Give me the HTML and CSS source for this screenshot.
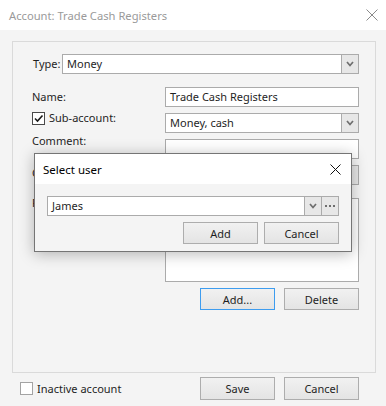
FILE: index.html
```html
<!DOCTYPE html>
<html lang="en">
<head>
  <meta charset="UTF-8">
  <title>Account: Trade Cash Registers</title>
  <link rel="stylesheet" href="styles.css">
</head>
<body>
  <div class="window">
    <div class="titlebar">
      <span class="title">Account: Trade Cash Registers</span>
      <svg class="close" width="12" height="12" viewBox="0 0 12 12">
        <path d="M0.5 0.5 L11.5 11.5 M11.5 0.5 L0.5 11.5" stroke="#8a8a8a" stroke-width="1" fill="none"/>
      </svg>
    </div>

    <div class="group">
      <div class="type-row">
        <span class="type-label">Type:</span>
        <div class="select type-select">
          <span class="value">Money</span>
          <span class="drop">
            <svg width="8" height="6" viewBox="0 0 8 6"><path d="M1 1 L4 4.5 L7 1" fill="none" stroke="#6e6e6e" stroke-width="1.7"/></svg>
          </span>
        </div>
      </div>

      <div class="cols">
        <div class="labels">
          <div class="lbl lbl-name">Name:</div>
          <div class="lbl lbl-sub">
            <span class="checkbox dark">
              <svg width="11" height="11" viewBox="0 0 11 11"><path d="M2 5.5 L4.5 8 L9.5 2.5" fill="none" stroke="#1a1a1a" stroke-width="1.6"/></svg>
            </span>
            Sub-account:
          </div>
          <div class="lbl lbl-comment">Comment:</div>
          <div class="lbl lbl-currency">Currency:</div>
          <div class="lbl lbl-resp">Responsible:</div>
        </div>

        <div class="fields">
          <div class="input">Trade Cash Registers</div>
          <div class="select">
            <span class="value">Money, cash</span>
            <span class="drop">
              <svg width="8" height="6" viewBox="0 0 8 6"><path d="M1 1 L4 4.5 L7 1" fill="none" stroke="#6e6e6e" stroke-width="1.7"/></svg>
            </span>
          </div>
          <div class="input"></div>
          <div class="select">
            <span class="value"></span>
            <span class="drop"></span>
          </div>
          <div class="list"></div>
          <div class="btn-row">
            <button class="btn focused">Add...</button>
            <button class="btn">Delete</button>
          </div>
        </div>
      </div>
    </div>

    <div class="footer">
      <div class="inactive">
        <span class="checkbox"></span>
        Inactive account
      </div>
      <div class="footer-btns">
        <button class="btn save">Save</button>
        <button class="btn cancel">Cancel</button>
      </div>
    </div>

    <div class="dialog">
      <div class="dialog-title">
        <span>Select user</span>
        <svg width="11" height="11" viewBox="0 0 11 11">
          <path d="M0.5 0.5 L10.5 10.5 M10.5 0.5 L0.5 10.5" stroke="#111" stroke-width="1" fill="none"/>
        </svg>
      </div>
      <div class="dialog-body">
        <div class="select combo">
          <span class="value">James</span>
          <span class="drop">
            <svg width="8" height="6" viewBox="0 0 8 6"><path d="M1 1 L4 4.5 L7 1" fill="none" stroke="#6e6e6e" stroke-width="1.7"/></svg>
          </span>
          <span class="drop dots">
            <svg width="10" height="2" viewBox="0 0 10 2"><rect x="0" y="0" width="2" height="2" fill="#6e6e6e"/><rect x="4" y="0" width="2" height="2" fill="#6e6e6e"/><rect x="8" y="0" width="2" height="2" fill="#6e6e6e"/></svg>
          </span>
        </div>
        <div class="dialog-btns">
          <button class="btn">Add</button>
          <button class="btn">Cancel</button>
        </div>
      </div>
    </div>
  </div>
</body>
</html>
```

FILE: styles.css
```css
body {
  margin: 0;
  font-family: "Noto Sans", "DejaVu Sans", sans-serif;
  font-size: 11px;
  color: #1f1f1f;
}

.window {
  position: relative;
  width: 386px;
  height: 406px;
  background-color: #f4f4f4;
  overflow: hidden;
}

.titlebar {
  height: 30px;
  background-color: #fff;
  display: flex;
  align-items: center;
  justify-content: space-between;
  padding: 0 8px 0 9px;
  box-sizing: border-box;
}

.title {
  color: #9a9a9a;
  font-size: 11.2px;
}

.group {
  margin: 11px 10px 0 12px;
  height: 332px;
  border: 1px solid #dadada;
  box-sizing: border-box;
}

.type-row {
  display: flex;
  margin-top: 12px;
  padding-left: 20px;
}

.type-label {
  width: 29px;
  line-height: 20px;
}

.select,
.input {
  height: 20px;
  border: 1px solid #ababab;
  background-color: #fff;
  box-sizing: border-box;
  display: flex;
  line-height: 18px;
}

.input {
  padding-left: 4px;
}

.select .value {
  flex: 1;
  padding-left: 4px;
}

.select .drop {
  width: 16px;
  border-left: 1px solid #ababab;
  background-color: #e7e7e7;
  display: flex;
  align-items: center;
  justify-content: center;
}

.type-select {
  width: 297px;
}

.cols {
  display: flex;
}

.labels {
  width: 152px;
  padding-left: 19px;
  box-sizing: border-box;
}

.lbl {
  line-height: 16px;
}

.lbl-name {
  margin-top: 15px;
}

.lbl-sub {
  margin-top: 5px;
  display: flex;
  align-items: center;
  gap: 4px;
}

.lbl-comment {
  margin-top: 7px;
}

.lbl-currency {
  margin-top: 16px;
}

.lbl-resp {
  margin-top: 14px;
}

.checkbox {
  width: 13px;
  height: 13px;
  border: 1px solid #a3a3a3;
  background-color: #fff;
  box-sizing: border-box;
  display: inline-flex;
  align-items: center;
  justify-content: center;
}

.checkbox.dark {
  border-color: #4a4a4a;
}

.fields {
  width: 194px;
  display: flex;
  flex-direction: column;
  gap: 6px;
  margin-top: 13px;
}

.list {
  height: 82px;
  margin-top: 7px;
  border: 1px solid #ababab;
  background-color: #fff;
}

.btn-row {
  display: flex;
  justify-content: flex-end;
  gap: 9px;
}

.btn {
  width: 75px;
  height: 22px;
  padding: 0;
  font-family: inherit;
  font-size: 11px;
  color: #1f1f1f;
  border: 1px solid #adadad;
  background: linear-gradient(#f1f1f1, #e4e4e4);
  box-sizing: border-box;
}

.btn.focused {
  border-color: #3d9cef;
}

.footer {
  display: flex;
  align-items: center;
  justify-content: space-between;
  padding: 4px 27px 0 20px;
}

.inactive {
  display: flex;
  align-items: center;
  gap: 4px;
}

.footer-btns {
  display: flex;
  gap: 9px;
}

.footer-btns .btn {
  height: 23px;
}

/* modal over the form */
.dialog {
  position: absolute;
  left: 34px;
  top: 153px;
  width: 318px;
  height: 99px;
  border: 1px solid #757575;
  background-color: #f4f4f4;
  box-sizing: border-box;
  box-shadow: 0 2px 14px rgba(0,0,0,0.28);
}

.dialog-title {
  height: 30px;
  background-color: #fff;
  display: flex;
  align-items: center;
  justify-content: space-between;
  padding: 0 10px 0 8px;
  font-size: 11.5px;
  color: #000;
}

.dialog-body {
  padding: 12px 12px 0 12px;
}

.combo {
  width: 292px;
}

.dialog-btns {
  display: flex;
  justify-content: flex-end;
  gap: 6px;
  margin-top: 6px;
}
```
